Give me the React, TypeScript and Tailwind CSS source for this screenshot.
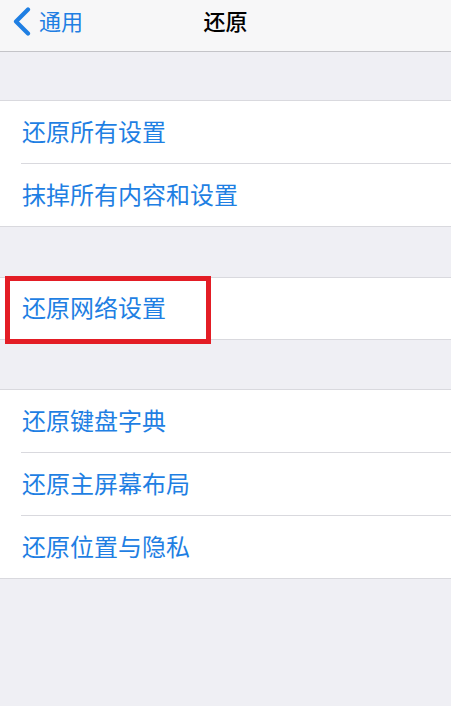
import React from "react";

const font = { fontFamily: '"Noto Sans CJK SC", "Noto Sans", sans-serif' };

function Row({ text, sep }: { text: string; sep?: boolean }) {
  return (
    <div className="relative">
      <div className="h-[62px] flex items-center pl-[22px] pb-[3px] text-[24px] text-[#1f7fe3] leading-none">{text}</div>
      {sep && <div className="ml-[21px] h-px bg-[#d9d9de]" />}
    </div>
  );
}

export default function App() {
  return (
    <div className="w-[451px] h-[706px] bg-[#efeff4] overflow-hidden relative" style={font}>
      <div className="h-[52px] bg-[#f7f7f8] border-b border-[#c4c4c8] relative">
        <div className="h-[42px] flex items-center justify-center relative">
          <div className="absolute left-[12px] top-0 h-[42px] flex items-center">
            <svg width="19" height="29" viewBox="0 0 19 29" className="mr-[8px]">
              <path d="M16 2.5 L4 14.5 L16 26.5" fill="none" stroke="#1f7fe3" strokeWidth="4.2" strokeLinecap="round" strokeLinejoin="round" />
            </svg>
            <span className="text-[22px] text-[#1f7fe3] leading-none pb-[2px]">通用</span>
          </div>
          <span className="text-[22px] text-black font-medium leading-none pb-[2px]">还原</span>
        </div>
      </div>

      <div className="mt-[48px] bg-white border-y border-[#d9d9de]">
        <Row text="还原所有设置" sep />
        <Row text="抹掉所有内容和设置" />
      </div>

      <div className="mt-[50px] bg-white border-y border-[#d9d9de]">
        <div className="h-[61px] flex items-center pl-[22px] pb-[3px] text-[24px] text-[#1f7fe3] leading-none">还原网络设置</div>
      </div>

      <div className="mt-[49px] bg-white border-y border-[#d9d9de]">
        <Row text="还原键盘字典" sep />
        <Row text="还原主屏幕布局" sep />
        <Row text="还原位置与隐私" />
      </div>

      <div className="absolute left-[5px] top-[276px] w-[206px] h-[68px] border-[5px] border-[#e31d25]" />
    </div>
  );
}
